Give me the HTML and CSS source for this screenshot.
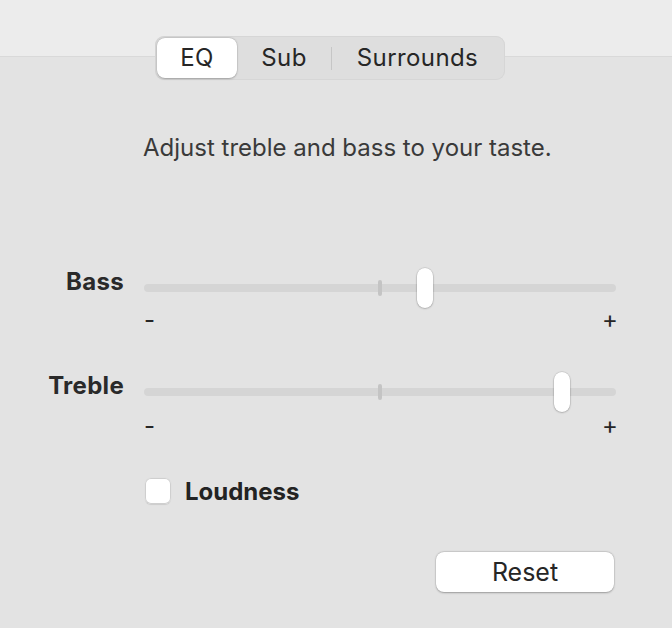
FILE: index.html
```html
<!DOCTYPE html>
<html lang="en">
<head>
<meta charset="utf-8">
<title>EQ</title>
<link rel="stylesheet" href="styles.css">
</head>
<body>
<div class="window">
  <div class="segmented">
    <div class="seg seg-eq selected">EQ</div>
    <div class="seg seg-sub">Sub</div>
    <div class="divider"></div>
    <div class="seg seg-sur">Surrounds</div>
  </div>

  <p class="desc">Adjust treble and bass to your taste.</p>

  <div class="slider-row bass-row">
    <div class="label">Bass</div>
    <div class="slider">
      <div class="track-area">
        <div class="track">
          <div class="tick"></div>
          <div class="thumb" style="left: 59.5%"></div>
        </div>
      </div>
      <div class="scale"><span class="minus">-</span><span class="plus">+</span></div>
    </div>
  </div>

  <div class="slider-row treble-row">
    <div class="label">Treble</div>
    <div class="slider">
      <div class="track-area">
        <div class="track">
          <div class="tick"></div>
          <div class="thumb" style="left: 88.6%"></div>
        </div>
      </div>
      <div class="scale treble-scale"><span class="minus">-</span><span class="plus">+</span></div>
    </div>
  </div>

  <label class="check-row">
    <span class="checkbox"></span>
    <span class="check-label">Loudness</span>
  </label>

  <div class="actions">
    <button class="reset">Reset</button>
  </div>
</div>
</body>
</html>
```
FILE: styles.css
```css
html, body {
  margin: 0;
  padding: 0;
}
body {
  width: 672px;
  height: 628px;
  overflow: hidden;
  font-family: Inter, "Noto Sans", "Liberation Sans", sans-serif;
  color: #262626;
  background: linear-gradient(to bottom, #ececec 0, #ececec 56px, #d9d9d9 56px, #d9d9d9 57px, #e3e3e3 57px, #e3e3e3 100%);
}
.window {
  display: flex;
  flex-direction: column;
  padding-top: 36px;
}
.segmented {
  align-self: flex-start;
  margin-left: 155px;
  display: flex;
  align-items: center;
  padding: 2px;
  height: 40px;
  border-radius: 9px;
  background: #dedede;
  box-shadow: inset 0 0 0 1px #d6d6d6;
}
.seg {
  height: 40px;
  display: flex;
  align-items: center;
  justify-content: center;
  font-size: 24px;
  line-height: 28px;
  color: #262626;
  letter-spacing: 0.4px;
}
.seg-eq { width: 80px; }
.seg-sub { width: 94px; }
.seg-sur { width: 171px; }
.selected {
  background: #ffffff;
  border-radius: 8px;
  box-shadow: 0 0.5px 2px rgba(0,0,0,0.25), 0 0 0 0.5px rgba(0,0,0,0.08);
}
.divider {
  width: 1px;
  height: 23px;
  background: #c6c6c6;
}
.desc {
  margin: 54px 0 0 143px;
  font-size: 24px;
  line-height: 28px;
  color: #3a3a3a;
}
.slider-row {
  display: grid;
  grid-template-columns: 124px 472px;
  column-gap: 20px;
}
.bass-row { margin-top: 106px; }
.treble-row { margin-top: 38px; }
.label {
  text-align: right;
  font-weight: 700;
  font-size: 24px;
  line-height: 28px;
  letter-spacing: 0.3px;
  color: #2a2a2a;
}
.track-area {
  height: 40px;
  display: flex;
  align-items: center;
}
.track {
  position: relative;
  flex: 1;
  height: 8px;
  border-radius: 4px;
  background: #d5d5d5;
}
.tick {
  position: absolute;
  left: 234px;
  top: -4px;
  width: 4px;
  height: 16px;
  border-radius: 2px;
  background: #c4c4c4;
}
.thumb {
  position: absolute;
  top: -16px;
  width: 16px;
  height: 40px;
  margin-left: -8px;
  border-radius: 8px;
  background: #ffffff;
  box-shadow: 0 0.5px 2px rgba(0,0,0,0.3), 0 0 0 0.5px rgba(0,0,0,0.1);
}
.scale {
  display: flex;
  justify-content: space-between;
  font-size: 24px;
  line-height: 28px;
  color: #262626;
  margin-top: -2px;
}
.treble-scale { margin-top: 0; }
.minus { margin-left: 0; }
.plus { margin-right: -2px; }
.check-row {
  display: flex;
  align-items: center;
  margin: 35px 0 0 145px;
  gap: 14px;
}
.checkbox {
  width: 26px;
  height: 26px;
  border-radius: 6px;
  background: #ffffff;
  box-shadow: inset 0 0 0 1px #cfcfcf, 0 0.5px 1px rgba(0,0,0,0.1);
}
.check-label {
  font-weight: 700;
  font-size: 24px;
  line-height: 28px;
  color: #232323;
  margin-top: 3px;
}
.actions {
  margin: 46px 0 0 436px;
}
.reset {
  width: 178px;
  height: 40px;
  border: none;
  border-radius: 8px;
  background: #ffffff;
  font-family: inherit;
  font-size: 25px;
  color: #262626;
  box-shadow: 0 0.5px 2px rgba(0,0,0,0.3), 0 0 0 0.5px rgba(0,0,0,0.08);
  padding: 0;
}
```
